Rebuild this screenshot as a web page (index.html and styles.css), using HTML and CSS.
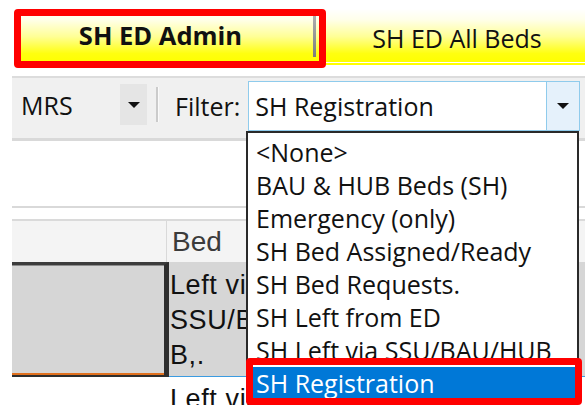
FILE: index.html
```html
<!DOCTYPE html>
<html lang="en">
<head>
<meta charset="utf-8">
<title>SH ED Admin</title>
<link rel="stylesheet" href="styles.css">
</head>
<body>
<div class="app">
  <div class="tabstrip">
    <div class="tab tab-active">
      <span class="tab-label">SH ED Admin</span>
      <span class="tab-edge"></span>
    </div>
    <div class="tab">
      <span class="tab-label">SH ED All Beds</span>
    </div>
  </div>

  <div class="toolbar">
    <div class="combo combo-flat">
      <span class="combo-text">MRS</span>
      <span class="combo-btn">
        <svg width="12" height="6" viewBox="0 0 12 6"><path d="M0 0H12L6 6Z" fill="#111"/></svg>
      </span>
    </div>
    <span class="tool-sep"></span>
    <span class="tool-label">Filter:</span>
    <div class="combo combo-open">
      <span class="combo-text">SH Registration</span>
      <span class="combo-btn">
        <svg width="12" height="6" viewBox="0 0 12 6"><path d="M0 0H12L6 6Z" fill="#111"/></svg>
      </span>
    </div>
  </div>

  <div class="grid">
    <div class="group-area"></div>
    <div class="grid-header">
      <div class="hcell hcell-first"></div>
      <div class="hcell">Bed</div>
    </div>
    <div class="grid-row row-selected">
      <div class="cell cell-focus"></div>
      <div class="cell cell-text">Left via<br>SSU/BAU/HU<br>B,.</div>
    </div>
    <div class="grid-row">
      <div class="cell cell-blank"></div>
      <div class="cell cell-text">Left via</div>
    </div>
  </div>

  <ul class="dropdown">
    <li>&lt;None&gt;</li>
    <li>BAU &amp; HUB Beds (SH)</li>
    <li>Emergency (only)</li>
    <li>SH Bed Assigned/Ready</li>
    <li>SH Bed Requests.</li>
    <li>SH Left from ED</li>
    <li>SH Left via SSU/BAU/HUB</li>
    <li class="is-selected">SH Registration</li>
  </ul>

  <div class="callout callout-tab"></div>
  <div class="callout callout-item"></div>
</div>
</body>
</html>
```

FILE: styles.css
```css
html, body {
  margin: 0;
  padding: 0;
  background: #fff;
  overflow: hidden;
}

.app {
  position: relative;
  width: 585px;
  height: 405px;
  overflow: hidden;
  font-family: "Open Sans", "Noto Sans", sans-serif;
  font-size: 25px;
  color: #111;
}

/* ---- tab strip ---- */
.tabstrip {
  display: flex;
  margin: 9px 0 11px 14px;
  padding-bottom: 1px;
  border-bottom: 2px solid #ffff00;
}

.tab {
  display: flex;
  height: 53px;
  width: 282px;
  flex: none;
  background: linear-gradient(to bottom, #ffffff 0%, #ffffea 20%, #ffff96 52%, #ffff10 84%, #ffff00 100%);
}

.tab-active {
  width: 302px;
}

.tab-label {
  flex: 1;
  text-align: center;
  line-height: 32px;
  padding-top: 13px;
}

.tab-active .tab-label {
  font-size: 25.5px;
  font-weight: 700;
  padding-top: 10px;
  padding-right: 6px;
}

.tab-edge {
  align-self: center;
  width: 3px;
  height: 42px;
  background: linear-gradient(to bottom, #b0b0b0, #7c7c7c);
}

/* ---- toolbar ---- */
.toolbar {
  display: flex;
  align-items: center;
  margin-left: 12px;
  height: 56px;
  padding-bottom: 4px;
  background: #f0f0f0;
  border-top: 2px solid #dcdcdc;
  border-bottom: 3px solid #d9d9d9;
}

.combo {
  display: flex;
  align-items: stretch;
  box-sizing: border-box;
}

.combo-text {
  flex: 1;
  display: flex;
  align-items: center;
  white-space: nowrap;
}

.combo-btn {
  display: flex;
  align-items: center;
  justify-content: center;
}

.combo-flat {
  width: 135px;
  height: 41px;
  margin-bottom: 3px;
}

.combo-flat .combo-text {
  padding-left: 9px;
}

.combo-flat .combo-btn {
  width: 27px;
  background: #e5e5e5;
}

.tool-sep {
  width: 2px;
  height: 35px;
  margin: 0 0 3px 9px;
  background: #cbcbcb;
  border-right: 1px solid #fafafa;
}

.tool-label {
  margin-left: 16px;
}

.combo-open {
  width: 332px;
  height: 50px;
  margin-left: 8px;
  background: #fff;
  border: 1px solid #8fcbec;
}

.combo-open .combo-text {
  padding-left: 6px;
}

.combo-open .combo-btn {
  width: 32px;
  background: #e5f1fb;
  border-left: 1px solid #8fcbec;
}

/* ---- grid ---- */
.grid {
  margin-left: 12px;
  font-family: "Liberation Sans", Arial, sans-serif;
}

.group-area {
  height: 65px;
  border-bottom: 2px solid #d9d9d9;
  margin-bottom: 11px;
}

.grid-header {
  display: flex;
  height: 41px;
  background: #f4f4f4;
  border-top: 2px solid #dadada;
}

.hcell {
  display: flex;
  align-items: center;
  padding-left: 5px;
  font-size: 28px;
  color: #3b3b3b;
}

.hcell-first {
  width: 154px;
  padding-left: 0;
  border-right: 1px solid #d9d9d9;
}

.grid-row {
  display: flex;
}

.cell {
  box-sizing: border-box;
}

.cell-focus {
  width: 157px;
  height: 115px;
  background: #d6d6d6;
  border-top: 3px solid #3c3c3c;
  border-right: 5px solid #2e2e2e;
  border-bottom: 2px solid #2e2e2e;
  box-shadow: inset 0 -2px 0 #e0701e, inset 0 1px 0 #8c8c8c;
}

.cell-blank {
  width: 157px;
}

.cell-text {
  flex: 1;
  font-size: 27px;
  letter-spacing: 0.6px;
  line-height: 35px;
  padding: 5px 0 0 1px;
  color: #111;
  white-space: nowrap;
}

.row-selected .cell-text {
  height: 115px;
  padding-top: 3px;
  background: #d6d6d6;
  border-top: 3px solid #d6d6d6;
  border-bottom: 1px solid #3c9be0;
}

/* ---- open filter list ---- */
.dropdown {
  position: absolute;
  left: 246px;
  top: 131px;
  width: 333px;
  box-sizing: border-box;
  margin: 0;
  padding: 3px 0 0;
  list-style: none;
  background: #fff;
  border: 2px solid #2a2a2a;
}

.dropdown li {
  height: 33px;
  line-height: 33px;
  padding-left: 8px;
  white-space: nowrap;
}

.dropdown li.is-selected {
  background: #0078d7;
  color: #fff;
}

/* ---- red call-out frames ---- */
.callout {
  position: absolute;
  box-sizing: border-box;
  border: 7px solid #ff0000;
  border-radius: 4px;
}

.callout-tab {
  left: 14px;
  top: 9px;
  width: 312px;
  height: 59px;
}

.callout-item {
  left: 246px;
  top: 358px;
  width: 336px;
  height: 47px;
}
```
